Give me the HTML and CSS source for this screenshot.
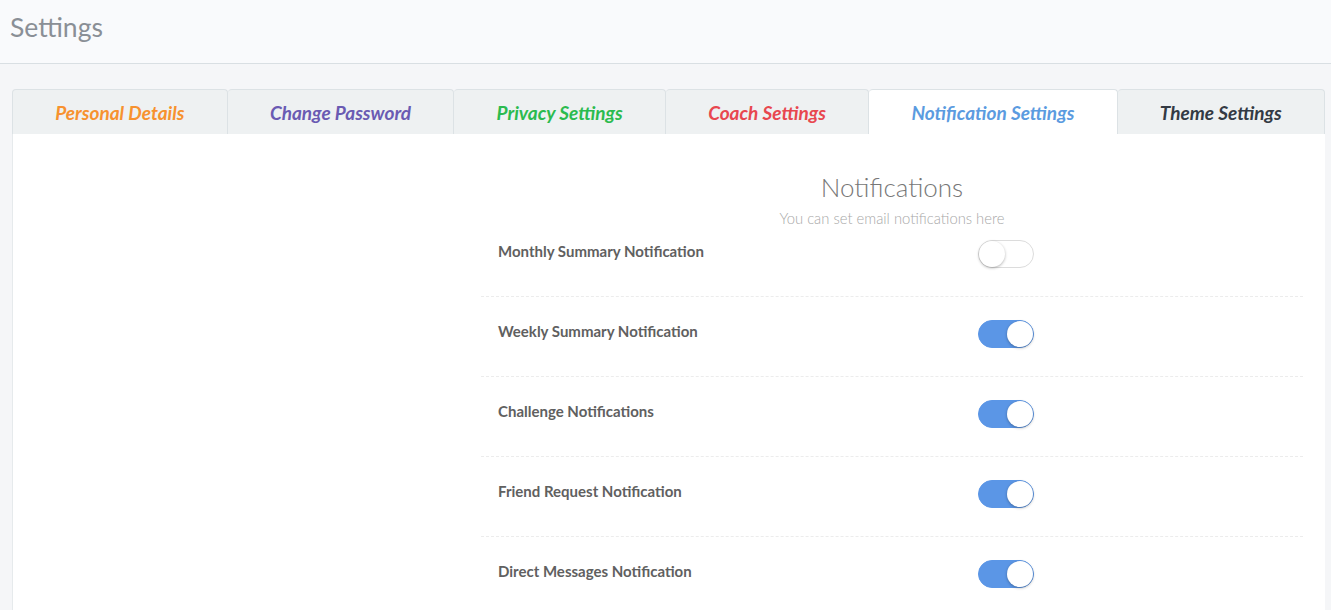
FILE: index.html
```html
<!DOCTYPE html>
<html>
<head>
<meta charset="utf-8">
<link rel="stylesheet" href="styles.css">
</head>
<body>
<header class="page-header"><h1 class="page-title">Settings</h1></header>
<main class="page-body">
  <nav class="tabs">
    <a class="tab tab-orange">Personal Details</a>
    <a class="tab tab-purple">Change Password</a>
    <a class="tab tab-green">Privacy Settings</a>
    <a class="tab tab-red">Coach Settings</a>
    <a class="tab tab-blue active">Notification Settings</a>
    <a class="tab tab-dark">Theme Settings</a>
  </nav>
  <section class="panel">
    <div class="notif">
      <div class="notif-head">
        <h2 class="notif-title">Notifications</h2>
        <p class="notif-sub">You can set email notifications here</p>
      </div>
      <div class="row row-first">
        <span class="row-label">Monthly Summary Notification</span>
        <span class="switch"><span class="knob"></span></span>
      </div>
      <div class="row">
        <span class="row-label">Weekly Summary Notification</span>
        <span class="switch on"><span class="knob"></span></span>
      </div>
      <div class="row">
        <span class="row-label">Challenge Notifications</span>
        <span class="switch on"><span class="knob"></span></span>
      </div>
      <div class="row">
        <span class="row-label">Friend Request Notification</span>
        <span class="switch on"><span class="knob"></span></span>
      </div>
      <div class="row">
        <span class="row-label">Direct Messages Notification</span>
        <span class="switch on"><span class="knob"></span></span>
      </div>
    </div>
  </section>
</main>
</body>
</html>
```
FILE: styles.css
```css
html, body {
  margin: 0;
  padding: 0;
  background: #f5f6f8;
  font-family: "Lato", "Liberation Sans", sans-serif;
  overflow: hidden;
}
.page-header {
  height: 64px;
  background: #f9fafc;
  border-bottom: 1px solid #d9dfe3;
  box-sizing: border-box;
  padding: 12px 10px 0;
}
.page-title {
  margin: 0;
  font-size: 26.5px;
  font-weight: 400;
  color: #8a8f96;
  line-height: 30px;
}
.page-body {
  padding: 25px 6px 0 12px;
}
.tabs {
  display: flex;
  height: 45px;
}
.tab {
  flex: 1 1 auto;
  display: flex;
  align-items: center;
  justify-content: center;
  box-sizing: border-box;
  background: #eef1f2;
  border: 1px solid #dce2e5;
  border-bottom: none;
  border-radius: 4px 4px 0 0;
  font-size: 19px;
  font-weight: 700;
  font-style: italic;
  padding: 0 20px;
  white-space: nowrap;
}
.tab + .tab { border-left: none; }
.tab.active { background: #fff; }
.tab-orange { color: #f7922f; }
.tab-purple { color: #6a5bb3; }
.tab-green { color: #2bbb4f; }
.tab-red { color: #e8474f; }
.tab-blue { color: #5b9be0; }
.tab-dark { color: #333a44; }
.panel {
  background: #fff;
  border-left: 1px solid #e6eaec;
  height: 500px;
  padding: 37px 22px 0 468px;
}
.notif-head {
  text-align: center;
  height: 59px;
}
.notif-title {
  margin: 0;
  font-size: 26px;
  line-height: 32px;
  font-weight: 300;
  color: #777;
}
.notif-sub {
  margin: 5px 0 0;
  font-size: 14.8px;
  line-height: 20px;
  font-weight: 300;
  color: #a8a8a8;
}
.row {
  display: flex;
  align-items: flex-start;
  height: 80px;
  box-sizing: border-box;
  padding: 23px 0 0 17px;
  border-bottom: 1px dashed #ececec;
}
.row-first {
  height: 67px;
  padding-top: 10px;
}
.row-label {
  width: 480px;
  font-size: 15px;
  line-height: 22px;
  font-weight: 700;
  color: #606060;
}
.switch {
  position: relative;
  display: block;
  width: 56px;
  height: 28px;
  box-sizing: border-box;
  border-radius: 14px;
  background: #fff;
  border: 1px solid #dcdcdc;
}
.switch.on {
  background: #5b96e6;
  border-color: #5b96e6;
}
.knob {
  position: absolute;
  top: 0;
  left: 0;
  width: 26px;
  height: 26px;
  box-sizing: border-box;
  border-radius: 50%;
  background: #fff;
  box-shadow: 0 1px 3px rgba(0,0,0,0.3);
}
.switch.on .knob {
  left: 28px;
}
```
